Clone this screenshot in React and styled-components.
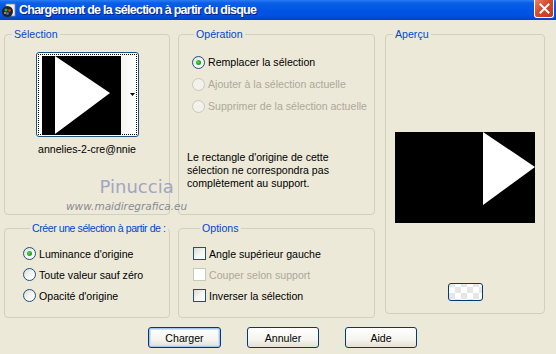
import React from 'react';
import styled, { createGlobalStyle } from 'styled-components';

const GlobalStyle = createGlobalStyle`
  html, body {
    margin: 0;
    padding: 0;
    background: #ece9d8;
  }
  body {
    width: 556px;
    height: 354px;
    overflow: hidden;
    font-family: "Liberation Sans", Arial, sans-serif;
    font-size: 10.6px;
    color: #000;
  }
`;

const Window = styled.div`
  width: 556px;
  height: 354px;
  display: flex;
  flex-direction: column;
  background: #ece9d8;
`;

const TitleBar = styled.div`
  height: 20px;
  display: flex;
  align-items: center;
  background: linear-gradient(
    to bottom,
    #2a7cf6 0%,
    #0a5fe6 15%,
    #0055e5 50%,
    #0050df 80%,
    #0043c6 100%
  );
  padding: 0 2px 0 1px;
`;

const TitleText = styled.span`
  flex: 1;
  margin-left: 3px;
  color: #fff;
  font-family: "Liberation Sans", Arial, sans-serif;
  font-weight: bold;
  font-size: 12.5px;
  letter-spacing: -0.75px;
  text-shadow: 1px 1px 0 #0a1f80;
`;

const CloseBtn = styled.div`
  width: 20px;
  height: 18px;
  margin-top: -3px;
  box-sizing: border-box;
  border: 1px solid #fff;
  border-top: none;
  border-radius: 0 0 3px 3px;
  background: linear-gradient(135deg, #e8826b 0%, #d8482a 45%, #c4381c 100%);
  display: flex;
  align-items: center;
  justify-content: center;
`;

const Body = styled.div`
  position: relative;
  padding: 8px 0 0 4px;
`;

const Grid = styled.div`
  display: grid;
  grid-template-columns: 166px 197px 162px;
  grid-template-rows: 187px 96px;
  column-gap: 8px;
  row-gap: 7px;
`;

const Group = styled.fieldset`
  margin: 0;
  min-width: 0;
  box-sizing: border-box;
  border: 1px solid #d0d0bf;
  border-radius: 4px;
  padding: ${(p) => p.$pad || '0'};
  display: flex;
  flex-direction: column;
  align-items: ${(p) => (p.$center ? 'center' : 'stretch')};
`;

const Legend = styled.legend`
  color: #0046d5;
  line-height: 13px;
  white-space: nowrap;
  padding: 0 2px;
  margin-left: 7px;
  letter-spacing: ${(p) => (p.$tight ? '-0.45px' : 'normal')};
`;

const PreviewGroup = styled(Group)`
  grid-column: 3;
  grid-row: 1 / span 2;
  height: 286px;
  margin-left: 2px;
`;

const Thumb = styled.div`
  width: 103px;
  height: 85px;
  flex-shrink: 0;
  box-sizing: border-box;
  border: 1px solid #1c5180;
  border-radius: 3px;
  background: #fff;
  padding: 1px;
`;

const ThumbFocus = styled.div`
  height: 100%;
  box-sizing: border-box;
  border: 1px dotted #000;
  display: flex;
  padding-left: 3px;
`;

const ThumbStrip = styled.div`
  flex: 1;
  display: flex;
  align-items: center;
  justify-content: flex-end;
  padding-right: 1px;
  background: linear-gradient(to right, #f4f4f0, #fff);
`;

const ThumbName = styled.div`
  margin-top: 6px;
  line-height: 13px;
`;

const Row = styled.label`
  display: flex;
  align-items: center;
  gap: 3px;
  white-space: nowrap;
  height: ${(p) => p.$h || 21}px;
  color: ${(p) => (p.$disabled ? '#aca899' : '#000')};
`;

const Radio = styled.span`
  width: 13px;
  height: 13px;
  box-sizing: border-box;
  border-radius: 50%;
  border: 1px solid ${(p) => (p.$disabled ? '#cac8bb' : '#1c5180')};
  background: ${(p) =>
    p.$disabled
      ? '#f2f1ea'
      : 'linear-gradient(135deg, #dcdcd5 0%, #f4f4f0 50%, #fff 100%)'};
  display: flex;
  align-items: center;
  justify-content: center;
  flex-shrink: 0;
`;

const RadioDot = styled.span`
  width: 5px;
  height: 5px;
  border-radius: 50%;
  background: radial-gradient(circle at 40% 40%, #5fd35f, #21a121 60%, #1a8a1a);
`;

const Check = styled.span`
  width: 13px;
  height: 13px;
  box-sizing: border-box;
  border: 1px solid ${(p) => (p.$disabled ? '#cac8bb' : '#1c5180')};
  background: ${(p) =>
    p.$disabled ? '#fff' : 'linear-gradient(135deg, #dcdcd5 0%, #f4f4f0 50%, #fff 100%)'};
  flex-shrink: 0;
`;

const Note = styled.p`
  margin: 34px 0 0 0;
  line-height: 13px;
`;

const PreviewBtn = styled.div`
  width: 35px;
  height: 18px;
  flex-shrink: 0;
  box-sizing: border-box;
  border: 1px solid #003c74;
  border-radius: 3px;
  margin-top: 60px;
  background: repeating-conic-gradient(#ffffff 0 25%, #e6e6e6 0 50%) 6px 3px / 12px 12px;
`;

const ButtonBar = styled.div`
  display: flex;
  gap: 26px;
  margin: 9px 0 0 144px;
`;

const Button = styled.div`
  width: ${(p) => p.$w || 72}px;
  height: 21px;
  box-sizing: border-box;
  border: 1px solid #003c74;
  border-radius: 3px;
  background: linear-gradient(to bottom, #ffffff 0%, #f5f4ee 60%, #e3e1d6 100%);
  box-shadow: ${(p) =>
    p.$default ? 'inset 0 0 0 1px #a6c4f0, inset 0 0 0 2px #cee0fb' : 'none'};
  display: flex;
  align-items: center;
  justify-content: center;
`;

const Watermark = styled.div`
  position: absolute;
  left: 66px;
  top: 157px;
  display: flex;
  flex-direction: column;
  align-items: center;
  pointer-events: none;
`;

const WaterName = styled.span`
  font-family: "DejaVu Sans", sans-serif;
  font-size: 18px;
  color: #a4a4c4;
  line-height: 20px;
  margin-left: 20px;
`;

const WaterUrl = styled.span`
  font-family: "DejaVu Sans", sans-serif;
  font-style: italic;
  font-size: 10.5px;
  color: #8a8a96;
  line-height: 12px;
  margin-top: 3px;
`;

const SelectionSvg = styled.svg`
  display: block;
  flex-shrink: 0;
  margin-top: 1px;
`;

const PreviewSvg = styled.svg`
  display: block;
  flex-shrink: 0;
  margin-top: 91px;
`;

const SelectionImage = () => (
  <SelectionSvg width="79" height="79" viewBox="0 0 79 79">
    <rect width="79" height="79" fill="#000" />
    <polygon points="13,0 68,37 13,78" fill="#fff" />
  </SelectionSvg>
);

const PreviewImage = () => (
  <PreviewSvg width="140" height="91" viewBox="0 0 140 91">
    <rect width="140" height="91" fill="#000" />
    <polygon points="88,0 140,35 88,73" fill="#fff" />
  </PreviewSvg>
);

const AppIcon = () => (
  <svg width="15" height="15" viewBox="0 0 15 15">
    <rect x="5" y="1" width="9" height="12" fill="#f0f0f0" stroke="#888" strokeWidth="0.8" />
    <circle cx="6.5" cy="8.5" r="5.5" fill="#222" />
    <circle cx="5" cy="7" r="1.6" fill="#2aa84a" />
    <circle cx="8.5" cy="7.5" r="1.4" fill="#c8342a" />
    <circle cx="6.5" cy="10.5" r="1.4" fill="#3a6fe0" />
    <circle cx="4" cy="10" r="1" fill="#d8b020" />
  </svg>
);

const CloseIcon = () => (
  <svg width="11" height="11" viewBox="0 0 11 11">
    <path d="M1.5 1.5 L9.5 9.5 M9.5 1.5 L1.5 9.5" stroke="#fff" strokeWidth="2" strokeLinecap="square" />
  </svg>
);

const ArrowDown = () => (
  <svg width="5" height="3" viewBox="0 0 5 3">
    <polygon points="0,0 5,0 2.5,3" fill="#000" />
  </svg>
);

const RadioRow = ({ checked, disabled, h, children }) => (
  <Row $disabled={disabled} $h={h}>
    <Radio $disabled={disabled}>{checked && <RadioDot />}</Radio>
    {children}
  </Row>
);

const CheckRow = ({ disabled, children }) => (
  <Row $disabled={disabled}>
    <Check $disabled={disabled} />
    {children}
  </Row>
);

const App = () => {
  return (
    <>
      <GlobalStyle />
      <Window>
        <TitleBar>
          <AppIcon />
          <TitleText>Chargement de la sélection à partir du disque</TitleText>
          <CloseBtn>
            <CloseIcon />
          </CloseBtn>
        </TitleBar>
        <Body>
          <Grid>
            <Group $center $pad="11px 0 0 0">
              <Legend>Sélection</Legend>
              <Thumb>
                <ThumbFocus>
                  <SelectionImage />
                  <ThumbStrip>
                    <ArrowDown />
                  </ThumbStrip>
                </ThumbFocus>
              </Thumb>
              <ThumbName>annelies-2-cre@nnie</ThumbName>
            </Group>

            <Group $pad="10px 0 0 8px">
              <Legend>Opération</Legend>
              <div style={{ paddingLeft: 5 }}>
                <RadioRow checked h={22}>Remplacer la sélection</RadioRow>
                <RadioRow disabled h={22}>Ajouter à la sélection actuelle</RadioRow>
                <RadioRow disabled h={22}>Supprimer de la sélection actuelle</RadioRow>
              </div>
              <Note>
                Le rectangle d'origine de cette
                <br />
                sélection ne correspondra pas
                <br />
                complètement au support.
              </Note>
            </Group>

            <PreviewGroup $center>
              <Legend>Aperçu</Legend>
              <PreviewImage />
              <PreviewBtn />
            </PreviewGroup>

            <Group $pad="8px 0 0 18px">
              <Legend $tight>Créer une sélection à partir de :</Legend>
              <RadioRow checked>Luminance d'origine</RadioRow>
              <RadioRow>Toute valeur sauf zéro</RadioRow>
              <RadioRow>Opacité d'origine</RadioRow>
            </Group>

            <Group $pad="8px 0 0 14px">
              <Legend>Options</Legend>
              <CheckRow>Angle supérieur gauche</CheckRow>
              <CheckRow disabled>Couper selon support</CheckRow>
              <CheckRow>Inverser la sélection</CheckRow>
            </Group>
          </Grid>

          <ButtonBar>
            <Button $default $w={73}>Charger</Button>
            <Button>Annuler</Button>
            <Button>Aide</Button>
          </ButtonBar>

          <Watermark>
            <WaterName>Pinuccia</WaterName>
            <WaterUrl>www.maidiregrafica.eu</WaterUrl>
          </Watermark>
        </Body>
      </Window>
    </>
  );
};

export default App;
